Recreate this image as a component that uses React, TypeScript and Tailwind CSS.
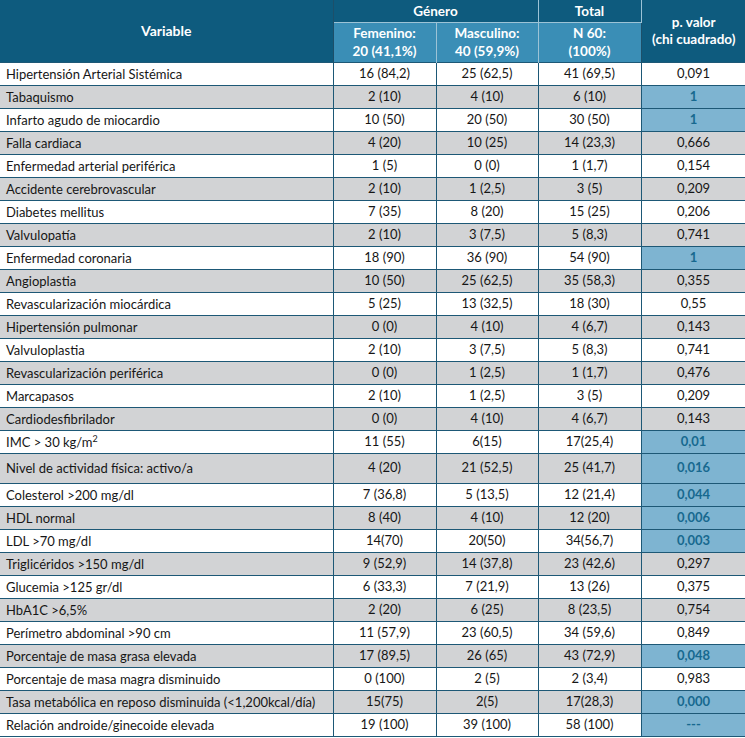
import React from 'react';

type Row = {
  label: React.ReactNode;
  fem: string;
  mas: string;
  total: string;
  p: string;
  sig?: boolean;
  tall?: boolean;
};

const rows: Row[] = [
  { label: 'Hipertensión Arterial Sistémica', fem: '16 (84,2)', mas: '25 (62,5)', total: '41 (69,5)', p: '0,091' },
  { label: 'Tabaquismo', fem: '2 (10)', mas: '4 (10)', total: '6 (10)', p: '1', sig: true },
  { label: 'Infarto agudo de miocardio', fem: '10 (50)', mas: '20 (50)', total: '30 (50)', p: '1', sig: true },
  { label: 'Falla cardiaca', fem: '4 (20)', mas: '10 (25)', total: '14 (23,3)', p: '0,666' },
  { label: 'Enfermedad arterial periférica', fem: '1 (5)', mas: '0 (0)', total: '1 (1,7)', p: '0,154' },
  { label: 'Accidente cerebrovascular', fem: '2 (10)', mas: '1 (2,5)', total: '3 (5)', p: '0,209' },
  { label: 'Diabetes mellitus', fem: '7 (35)', mas: '8 (20)', total: '15 (25)', p: '0,206' },
  { label: 'Valvulopatía', fem: '2 (10)', mas: '3 (7,5)', total: '5 (8,3)', p: '0,741' },
  { label: 'Enfermedad coronaria', fem: '18 (90)', mas: '36 (90)', total: '54 (90)', p: '1', sig: true },
  { label: 'Angioplastia', fem: '10 (50)', mas: '25 (62,5)', total: '35 (58,3)', p: '0,355' },
  { label: 'Revascularización miocárdica', fem: '5 (25)', mas: '13 (32,5)', total: '18 (30)', p: '0,55' },
  { label: 'Hipertensión pulmonar', fem: '0 (0)', mas: '4 (10)', total: '4 (6,7)', p: '0,143' },
  { label: 'Valvuloplastia', fem: '2 (10)', mas: '3 (7,5)', total: '5 (8,3)', p: '0,741' },
  { label: 'Revascularización periférica', fem: '0 (0)', mas: '1 (2,5)', total: '1 (1,7)', p: '0,476' },
  { label: 'Marcapasos', fem: '2 (10)', mas: '1 (2,5)', total: '3 (5)', p: '0,209' },
  { label: 'Cardiodesfibrilador', fem: '0 (0)', mas: '4 (10)', total: '4 (6,7)', p: '0,143' },
  { label: <>IMC &gt; 30 kg/m<sup className="text-[9px]">2</sup></>, fem: '11 (55)', mas: '6(15)', total: '17(25,4)', p: '0,01', sig: true },
  { label: 'Nivel de actividad física: activo/a', fem: '4 (20)', mas: '21 (52,5)', total: '25 (41,7)', p: '0,016', sig: true, tall: true },
  { label: 'Colesterol >200 mg/dl', fem: '7 (36,8)', mas: '5 (13,5)', total: '12 (21,4)', p: '0,044', sig: true },
  { label: 'HDL normal', fem: '8 (40)', mas: '4 (10)', total: '12 (20)', p: '0,006', sig: true },
  { label: 'LDL >70 mg/dl', fem: '14(70)', mas: '20(50)', total: '34(56,7)', p: '0,003', sig: true },
  { label: 'Triglicéridos >150 mg/dl', fem: '9 (52,9)', mas: '14 (37,8)', total: '23 (42,6)', p: '0,297' },
  { label: 'Glucemia >125 gr/dl', fem: '6 (33,3)', mas: '7 (21,9)', total: '13 (26)', p: '0,375' },
  { label: 'HbA1C  >6,5%', fem: '2 (20)', mas: '6 (25)', total: '8 (23,5)', p: '0,754' },
  { label: 'Perímetro abdominal >90 cm', fem: '11 (57,9)', mas: '23 (60,5)', total: '34 (59,6)', p: '0,849' },
  { label: 'Porcentaje de masa grasa elevada', fem: '17 (89,5)', mas: '26 (65)', total: '43 (72,9)', p: '0,048', sig: true },
  { label: 'Porcentaje de masa magra disminuido', fem: '0 (100)', mas: '2 (5)', total: '2 (3,4)', p: '0,983' },
  { label: 'Tasa metabólica en reposo disminuida (<1,200kcal/día)', fem: '15(75)', mas: '2(5)', total: '17(28,3)', p: '0,000', sig: true },
  { label: 'Relación androide/ginecoide elevada', fem: '19 (100)', mas: '39 (100)', total: '58 (100)', p: '---', sig: true },
];

const cell = 'border border-[#1d5876] text-center';

export default function App() {
  return (
    <div className="w-[745px] h-[738px] bg-white overflow-hidden font-['Lato',sans-serif] text-[13px] text-[#161616]">
      <table className="w-[746px] border-collapse table-fixed">
        <colgroup>
          <col className="w-[333px]" />
          <col className="w-[103px]" />
          <col className="w-[102px]" />
          <col className="w-[103px]" />
          <col className="w-[105px]" />
        </colgroup>
        <thead className="font-bold text-white text-[13.5px] leading-[18px]">
          <tr className="h-[22px]">
            <th rowSpan={2} className="bg-[#0e5b7e] border-r border-[#1d4f69] border-l-0 text-[14px]">Variable</th>
            <th colSpan={2} className="bg-[#0e5b7e] border-b border-r border-[#9cc3d6]">Género</th>
            <th className="bg-[#0e5b7e] border-b border-r border-[#9cc3d6]">Total</th>
            <th rowSpan={2} className="bg-[#0e5b7e] leading-[17px]">p. valor<br />(chi cuadrado)</th>
          </tr>
          <tr className="h-[40px]">
            <th className="bg-[#3a8eb6] border-r border-[#9cc3d6] leading-[18px]">Femenino:<br />20 (41,1%)</th>
            <th className="bg-[#3a8eb6] border-r border-[#9cc3d6] leading-[18px]">Masculino:<br />40 (59,9%)</th>
            <th className="bg-[#3a8eb6] border-r border-[#1d4f69] leading-[18px]">N 60:<br />(100%)</th>
          </tr>
        </thead>
        <tbody>
          {rows.map((r, i) => {
            const bg = i % 2 === 1 ? 'bg-[#d2d3d5]' : 'bg-white';
            return (
              <tr key={i} className={r.tall ? 'h-[30px]' : 'h-[23px]'}>
                <td className={`${bg} border-t border-b border-r border-[#1d5876] pl-[6px] text-left leading-[16px]`}>{r.label}</td>
                <td className={`${bg} ${cell}`}>{r.fem}</td>
                <td className={`${bg} ${cell}`}>{r.mas}</td>
                <td className={`${bg} ${cell}`}>{r.total}</td>
                <td className={`${cell} ${r.sig ? 'bg-[#7eb4d1] text-[#17698f] font-bold' : bg}`}>{r.p}</td>
              </tr>
            );
          })}
        </tbody>
      </table>
    </div>
  );
}
